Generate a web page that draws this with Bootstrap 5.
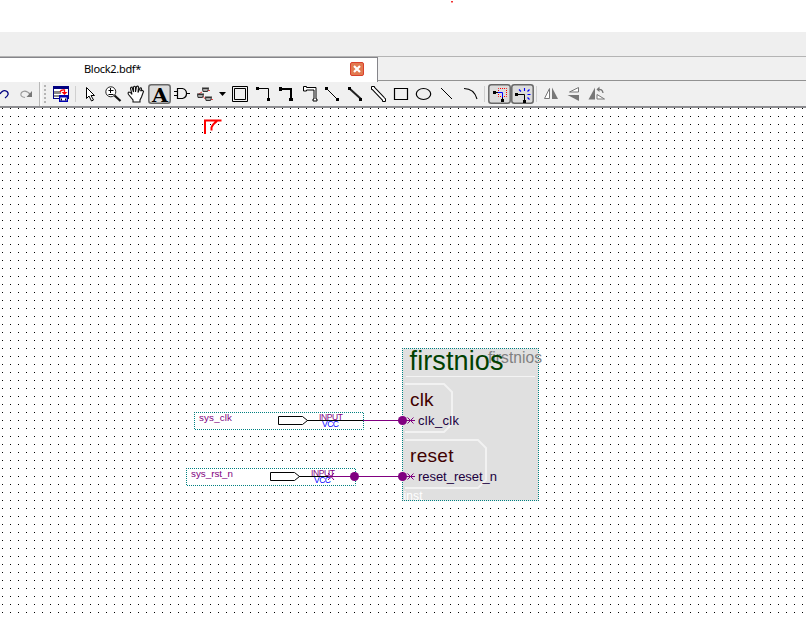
<!DOCTYPE html>
<html lang="en">
<head>
<meta charset="utf-8">
<title>Block2.bdf</title>
<link href="https://cdn.jsdelivr.net/npm/bootstrap@5.3.0/dist/css/bootstrap.min.css" rel="stylesheet">
<style>
body{width:806px;height:617px;font-family:"Liberation Sans",Arial,sans-serif}
.top-space{height:32px}
.band{height:25px;background:#efefef;border-bottom:1px solid #b4b4b4}
.tabstrip{height:25px;background:#f0f0f0}
.doc-tab{width:378px;border-top:1px solid #85858a;border-right:1px solid #85858a;background:#fff;font:11px "Noto Sans","Open Sans",sans-serif;color:#000}
.tab-rest{height:24px;border-bottom:1px solid #929292}
.doc-title{padding:0 0 3px 84px;letter-spacing:-.3px}
.close-btn{margin:0 13px 2px 0;width:14px;height:14px}
.toolrow{height:26px;background:#f0f0f0;border-bottom:2px solid #8c8c90;box-sizing:border-box}
svg{display:block;flex:none}
.k{fill:none;stroke:#000}
.sheet text{font-family:"Liberation Sans",Arial,sans-serif}
</style>
<script src="https://cdn.jsdelivr.net/npm/bootstrap@5.3.0/dist/js/bootstrap.bundle.min.js"></script>
</head>
<body class="bg-white overflow-hidden d-flex flex-column">
<div class="top-space flex-shrink-0"><svg width="806" height="32"><path d="M451 1h2v1h-2z" fill="#e33"/><path d="M451 2h2v1h-2z" fill="#f99"/></svg></div>
<div class="band flex-shrink-0"></div>
<div class="tabstrip d-flex flex-shrink-0">
  <div class="doc-tab d-flex align-items-center justify-content-between">
    <span class="doc-title">Block2.bdf*</span>
    <svg class="close-btn" viewBox="0 0 14 14"><rect x=".5" y=".5" width="13" height="13" rx="1.5" fill="#e27a50" stroke="#d9402c"/><path d="M4 4l6 6M10 4l-6 6" stroke="#fff" stroke-width="2.2"/></svg>
  </div>
  <div class="tab-rest flex-grow-1"></div>
</div>
<div class="toolrow d-flex flex-shrink-0">
  <svg width="15" height="24" viewBox="0 82 15 24"><path d="M0 94q3-5 7-2.500q3 3-2 6.500" fill="none" stroke="#000080" stroke-width="1.3"/></svg>
  <svg width="23" height="24" viewBox="15 82 23 24"><path d="M25 97.500q-6-1-3.500-5q4-3.500 9 2" fill="none" stroke="#999" stroke-width="1.2"/><path d="M32 91v6h-5.500z" fill="#777"/></svg>
  <svg width="12" height="24" viewBox="38 82 12 24"><path d="M39.5 82v24" stroke="#b8b8b8"/><path d="M41 82v24" stroke="#fff"/><path d="M45 85v19" stroke="#b5b5b5" stroke-width="2" stroke-dasharray="2 2"/></svg>
  <svg width="22" height="24" viewBox="50 82 22 24"><rect x="53.5" y="86.500" width="15" height="12" fill="#fff" stroke="#000080"/><path d="M53 87.500h16" stroke="#000080" stroke-width="3"/><path d="M54 91h7v3h-7zM54 95h5v2h-5z" fill="#888"/><path d="M60 92q1-2.500 4.500-2v3" fill="none" stroke="red" stroke-width="1.300"/><path d="M61.500 92h6l-3 3z" fill="red"/><path d="M59.700 95.700h7.600v5.600h-7.600z" fill="#fff" stroke="#0000b0" stroke-width="1.400"/><path d="M59 96.500h9" stroke="#0000b0" stroke-width="2"/><path d="M61 98.500h1v2h-1zM65 98.500h1v2h-1z"/></svg>
  <svg width="30" height="24" viewBox="72 82 30 24"><path d="M75.500 86v16" stroke="#d0d0d0"/><path d="M86.500 87.500v11l2.500-2.500 2.500 5 2-1-2.500-4.500h3.500z" fill="#fff" stroke="#000"/></svg>
  <svg width="23" height="24" viewBox="102 82 23 24"><circle cx="110.800" cy="91.800" r="5" fill="#fff" stroke="#222"/><path d="M108.500 90.500h5M110.500 88v5M108.500 94.500h5" class="k"/><path d="M114.500 95.500l6 5.500" stroke="#111" stroke-width="2.200"/></svg>
  <svg width="23" height="24" viewBox="125 82 23 24"><path d="M133 102v-2l-4.500-5.500q-1-2 .5-2.500 1.500 0 3 2.500l-1.500-6q0-1.500 1.500-1.500l1.500 5v-5q1-1.500 2 0v5l1-5.500q1.500-1 2 .5l-.5 5.500 2-4.500q1.500-.5 1.500 1l-1 2q2-1.500 3 .5l-2 5.500-1.500 3v2z" fill="#fff" stroke="#111" stroke-width="1.100"/></svg>
  <svg width="23" height="24" viewBox="148 82 23 24"><rect x="148.800" y="84.800" width="21.400" height="18.400" rx="2.500" fill="#dcdcdc" stroke="#686868" stroke-width="1.500"/><text x="160" y="101.500" text-anchor="middle" font-family="DejaVu Serif,serif" font-weight="bold" font-size="18" textLength="16" lengthAdjust="spacingAndGlyphs">A</text></svg>
  <svg width="23" height="24" viewBox="171 82 23 24"><path class="k" stroke-width="1.200" d="M177.500 88.500h5q4 1 4 5t-4 5h-5zM174 91.500h3M174 95.500h3M187 93.500h3"/></svg>
  <svg width="36" height="24" viewBox="194 82 36 24"><path d="M208 90.500h2M198 94.500l4-2.500M203 96l2 3M211 99.500h2" stroke="#e44"/><g fill="#aaa" stroke="#333"><path d="M202.500 88.500h6l-1 3h-4.500zM197.500 94.500h6l-1 3h-4.500zM205.500 97.500h6l-1 3h-4.500z"/></g><path d="M202 88h7M197 94h7M205 97h7" stroke="#333" stroke-width="1"/><path d="M219 92h7l-3.500 4z"/></svg>
  <svg width="22" height="24" viewBox="230 82 22 24"><path class="k" d="M232.500 86.500h15v15h-15zM234.500 88.500h11v11h-11z"/></svg>
  <svg width="23" height="24" viewBox="252 82 23 24"><path class="k" d="M258 88.500h10.500v11"/><path d="M256 87h3v3h-3zM267 98h3v3h-3z"/></svg>
  <svg width="23" height="24" viewBox="275 82 23 24"><path class="k" stroke-width="2" d="M281 89h10v11"/><path d="M279 87h3v4h-3zM289 98h4v3h-4z"/></svg>
  <svg width="23" height="24" viewBox="298 82 23 24"><path d="M303.500 86.500h3v1h9.500v11.500h1v2h-4v-2h1v-9h-7.500v1h-3z" fill="#fff" stroke="#000"/></svg>
  <svg width="23" height="24" viewBox="321 82 23 24"><path class="k" d="M327 89l10 10"/><path d="M325 87h3v3h-3zM336 98h3v3h-3z"/></svg>
  <svg width="23" height="24" viewBox="344 82 23 24"><path d="M350 89l11 10" stroke="#222" stroke-width="2"/><path d="M348 87h3v3h-3zM359 98h3v3h-3z"/></svg>
  <svg width="23" height="24" viewBox="367 82 23 24"><path d="M373 88l10.500 11" stroke="#000" stroke-width="4"/><path d="M371.500 86.500h3v3h-3zM382.500 98.500h3v3h-3z" fill="#fff" stroke="#000"/><path d="M373 88l11 11.500" stroke="#fff" stroke-width="2"/></svg>
  <svg width="23" height="24" viewBox="390 82 23 24"><path class="k" stroke-width="1.200" d="M394.500 88.500h13v11h-13z"/></svg>
  <svg width="23" height="24" viewBox="413 82 23 24"><ellipse cx="423.500" cy="94" rx="7.200" ry="5.500" class="k" stroke-width="1.200"/></svg>
  <svg width="23" height="24" viewBox="436 82 23 24"><path class="k" d="M441 88l11 11"/></svg>
  <svg width="29" height="24" viewBox="459 82 29 24"><path class="k" stroke-width="1.100" d="M464 88.500q10 0 13 10.500"/><path d="M484.500 86v16" stroke="#d0d0d0"/></svg>
  <svg width="23" height="24" viewBox="488 82 23 24"><rect x="488.800" y="84.800" width="21.400" height="18.400" rx="2.500" fill="#dcdcdc" stroke="#686868" stroke-width="1.500"/><path d="M498.500 88.500h8v8h-8z" fill="none" stroke="red" stroke-dasharray="1 1" stroke-dashoffset=".5"/><path d="M495 92.500h3M502.500 97v3" class="k"/><path d="M498 92.500h4.500v5" fill="none" stroke="#00f"/><path d="M493 91h3v3h-3zM501 99h3v3h-3z"/></svg>
  <svg width="23" height="24" viewBox="511 82 23 24"><rect x="511.800" y="84.800" width="21.400" height="18.400" rx="2.500" fill="#dcdcdc" stroke="#686868" stroke-width="1.500"/><path class="k" d="M517 94.500h7.500v6"/><path d="M515 93h3v3h-3zM523 100h3v3h-3z"/><path d="M524.500 88v3M519 89.500l2 2M529.500 89.500l-2 2M527.500 94.500h3M527.500 97.500l2 2" stroke="#00f" stroke-width="1.100"/></svg>
  <svg width="28" height="24" viewBox="534 82 28 24"><path d="M536.500 86v16" stroke="#d0d0d0"/><path d="M549.500 88.500v10h-5z" fill="#fff" stroke="#777"/><path d="M552 87.500v11.500h6z" fill="#777"/></svg>
  <svg width="23" height="24" viewBox="562 82 23 24"><path d="M578.500 87.500v4.500h-9z" fill="#fff" stroke="#777"/><path d="M567.500 95h11.500v6z" fill="#777"/></svg>
  <svg width="23" height="24" viewBox="585 82 23 24"><path d="M595 87.500v12h-6.500z" fill="#777"/><path d="M597 94.500l7.500 4.500h-7.500z" fill="#fff" stroke="#777"/><path d="M597.500 89.500q5-1 5.500 3.500" fill="none" stroke="#777" stroke-width="1.300"/><path d="M596.500 89.500l3-3v5.500z" fill="#777"/></svg>
</div>
<svg class="sheet" width="806" height="509" viewBox="0 108 806 509">
  <defs><pattern id="grid" x="2" y="108" width="8" height="8" patternUnits="userSpaceOnUse"><path d="M0 0h1v1H0z"/></pattern></defs>
  <rect y="108" width="806" height="509" fill="url(#grid)"/>
  <path d="M205 134v-13.500h16.500M211.500 130.500v-3q1-3 5.500-6.500" fill="none" stroke="#f00" stroke-width="2"/>
  <g fill="#fff" stroke="#008080" stroke-dasharray="1 1" stroke-dashoffset=".5">
    <path d="M194.500 412.500h169v17h-169z"/><path d="M186.500 468.500h169v17h-169z"/>
    <path d="M402.500 348.500h136v152h-136z" fill="#e0e0e0"/>
  </g>
  <g fill="#fff" stroke="#000"><path d="M278.500 416.500h24l5 4-5 4h-24z"/><path d="M270.500 472.500h24l5 4-5 4h-24z"/></g>
  <g font-size="9.800" fill="#800080">
    <text x="199" y="421" textLength="33">sys_clk</text><text x="191" y="477" textLength="42">sys_rst_n</text>
    <g font-size="8.500"><text x="319" y="420" textLength="24">INPUT</text><text x="311" y="476" textLength="24">INPUT</text>
    <g fill="#00f"><text x="322" y="427" textLength="17">VCC</text><text x="314" y="483" textLength="17">VCC</text></g></g>
  </g>
  <path d="M307 420.500h56M299 476.500h32" stroke="#000"/>
  <path d="M363 420.500h52M328 476.500h87M328 473l6 7M334 473l-6 7M407.500 417.500l6 6M413.500 417.500l-6 6M407.500 473.500l6 6M413.500 473.500l-6 6" stroke="#800080" fill="none"/>
  <g fill="#800080"><circle cx="354.500" cy="476.500" r="4.500"/><circle cx="402.500" cy="420.500" r="4.500"/><circle cx="402.500" cy="476.500" r="4.500"/></g>
  <path d="M406 376.500h129" stroke="#f4f4f4"/>
  <path d="M405 384h39l8 8v32l-8 8h-39M405 440h73l8 8v32l-8 8h-73" fill="none" stroke="#f2f2f2" stroke-width="2"/>
  <text x="488" y="363" font-size="15.600" fill="#808080" textLength="54">firstnios</text>
  <text x="409.500" y="370" font-size="27" fill="#004000" textLength="94">firstnios</text>
  <g font-size="19" fill="#400000"><text x="410" y="406" textLength="23.500">clk</text><text x="410" y="462" textLength="43.500">reset</text></g>
  <g font-size="13" fill="#200040"><text x="418" y="425" textLength="41">clk_clk</text><text x="418" y="481" textLength="79">reset_reset_n</text></g>
  <text x="403.500" y="500" font-size="12" fill="#fff" textLength="19">inst</text>
</svg>
</body>
</html>
